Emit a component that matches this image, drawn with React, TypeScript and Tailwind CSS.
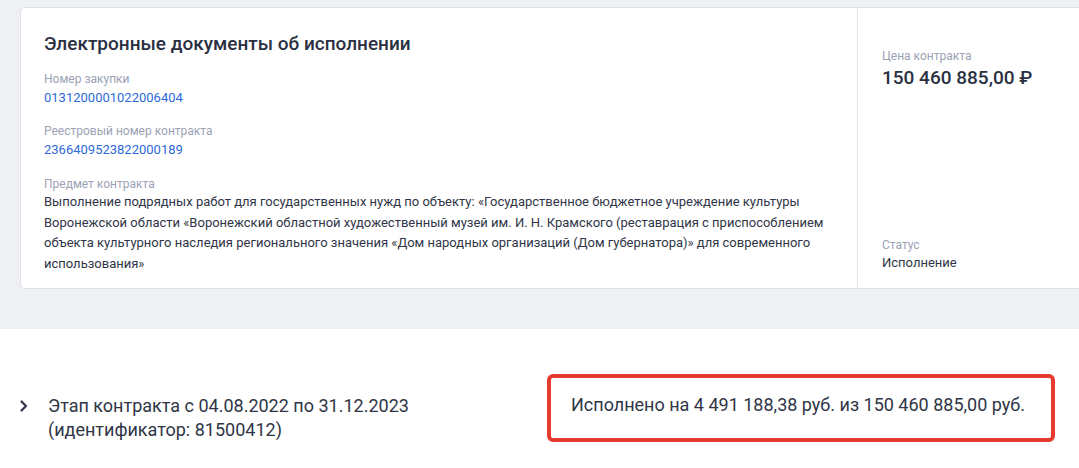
const ContractCard = () => {
  return (
    <div className="bg-[#eef0f3] pt-[7px] pb-[40px] pl-[20px] overflow-hidden">
      <div className="flex w-[1120px] bg-white border border-[#dde2ea] rounded-[4px]">
        <div className="w-[837px] shrink-0 border-r border-[#e3e6ec] pl-[23px] pr-[20px] pt-[22px] pb-[14px]">
          <h1 className="text-[19px] leading-[28px] font-medium text-[#2a3042]">
            Электронные документы об исполнении
          </h1>

          <div className="mt-[13px] text-[12px] leading-[16px] text-[#9aa2b4]">Номер закупки</div>
          <a className="block mt-[1px] text-[13px] leading-[20px] text-[#2d69d8]">0131200001022006404</a>

          <div className="mt-[15px] text-[12px] leading-[16px] text-[#9aa2b4]">Реестровый номер контракта</div>
          <a className="block mt-[1px] text-[13px] leading-[20px] text-[#2d69d8]">2366409523822000189</a>

          <div className="mt-[16px] text-[12px] leading-[16px] text-[#9aa2b4]">Предмет контракта</div>
          <p className="text-[13px] leading-[20.5px] text-[#2f3546]">
            Выполнение подрядных работ для государственных нужд по объекту: «Государственное бюджетное учреждение культуры
            Воронежской области «Воронежский областной художественный музей им. И. Н. Крамского (реставрация с приспособлением
            объекта культурного наследия регионального значения «Дом народных организаций (Дом губернатора)» для современного
            использования»
          </p>
        </div>

        <div className="flex-1 flex flex-col justify-between pl-[24px] pt-[40px] pb-[15px]">
          <div>
            <div className="text-[12px] leading-[16px] text-[#9aa2b4]">Цена контракта</div>
            <div className="text-[19px] leading-[28px] font-medium text-[#2a3042]">150 460 885,00 ₽</div>
          </div>
          <div>
            <div className="text-[12px] leading-[16px] text-[#9aa2b4]">Статус</div>
            <div className="text-[13px] leading-[20px] text-[#2f3546]">Исполнение</div>
          </div>
        </div>
      </div>
    </div>
  );
};

const App = () => {
  return (
    <div className="min-h-screen bg-white font-['Roboto','Liberation_Sans',sans-serif]">
      <ContractCard />

      <div className="flex pt-[45px]">
        <div className="w-[547px] shrink-0 flex items-start pl-[20px] pt-[20px]">
          <svg width="8" height="12" viewBox="0 0 8 12" className="mt-[6px] mr-[20px]" fill="none">
            <path d="M1.5 1.5 L6 6 L1.5 10.5" stroke="#2f3546" strokeWidth="2.2" strokeLinecap="round" strokeLinejoin="round" />
          </svg>
          <div className="text-[18px] leading-[24px] text-[#2f3546]">
            Этап контракта с 04.08.2022 по 31.12.2023
            <br />
            (идентификатор: 81500412)
          </div>
        </div>

        <div className="w-[508px] border-4 border-[#e53b30] rounded-[6px] px-[20px] pt-[16px] pb-[22px] text-[18px] leading-[22px] text-[#2f3546]">
          Исполнено на 4 491 188,38 руб. из 150 460 885,00 руб.
        </div>
      </div>
    </div>
  );
};

export default App;
